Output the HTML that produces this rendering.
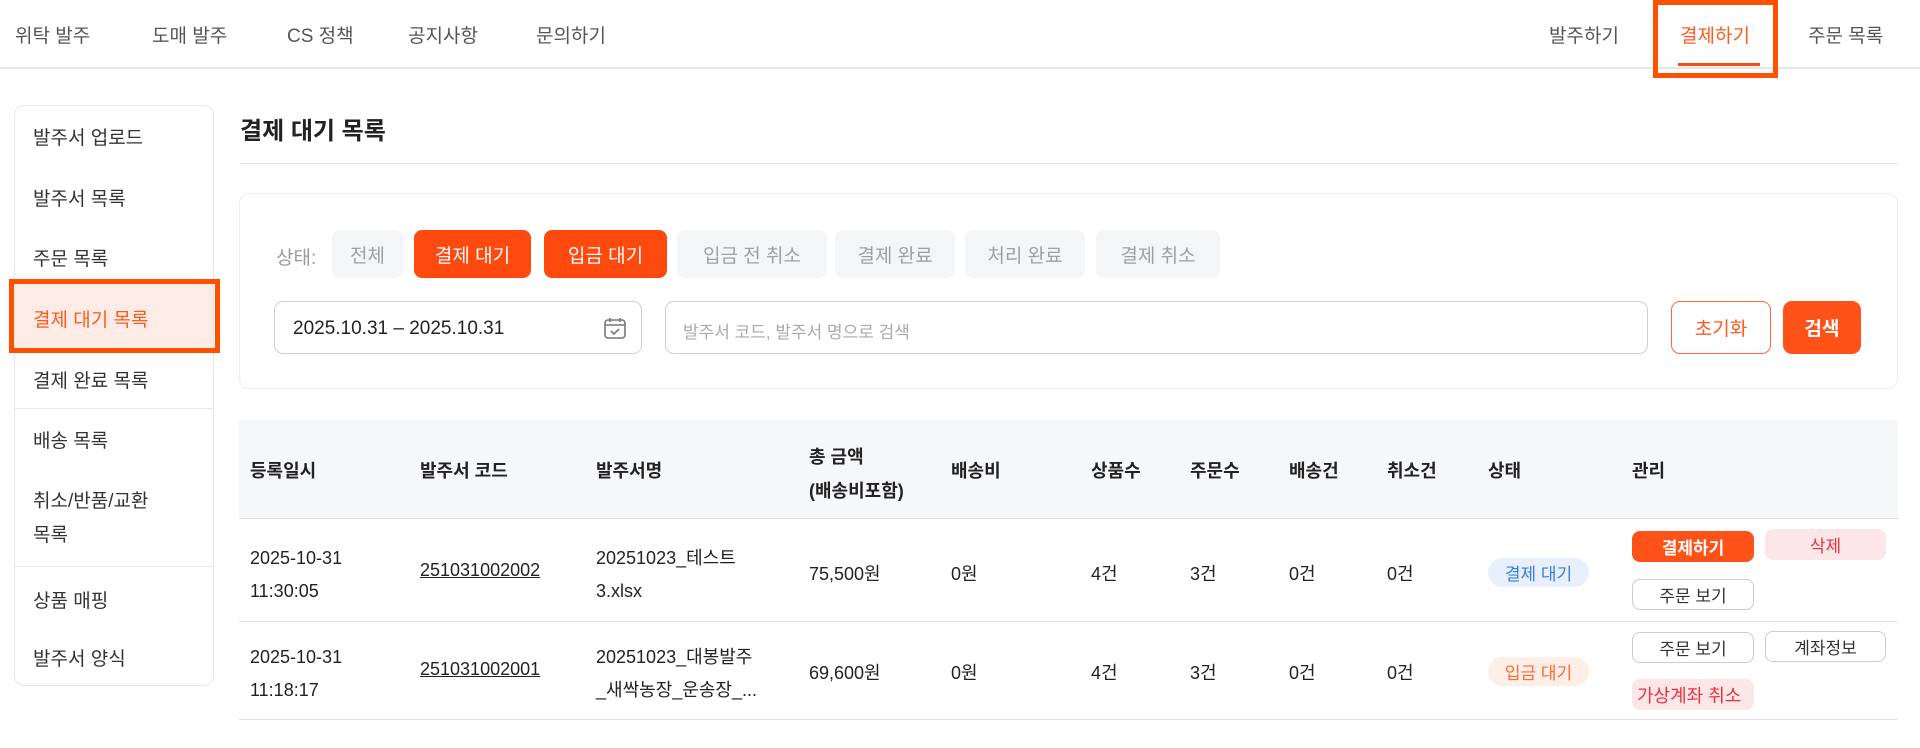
<!DOCTYPE html>
<html><head><meta charset="utf-8">
<style>
*{box-sizing:border-box;margin:0;padding:0}
body{width:1920px;height:748px;background:#fff;font-family:"Liberation Sans","Noto Sans CJK KR",sans-serif;color:#222;position:relative;overflow:hidden}
.a{position:absolute;white-space:nowrap}
.nav{font-size:19px;color:#555;top:21px}
.side{font-size:19px;color:#333;left:33px}
.chip{position:absolute;top:230px;height:48px;border-radius:8px;background:#f4f5f7;color:#a0a0a0;font-size:19px;display:flex;align-items:center;justify-content:center}
.chip.on{background:#ff4a0f;color:#fff}
.th{font-size:18px;font-weight:bold;color:#222;top:457px}
.td{font-size:18px;color:#222}
.btn{position:absolute;height:31px;border-radius:8px;font-size:17px;display:flex;align-items:center;justify-content:center;overflow:hidden;white-space:nowrap}
</style></head><body>
<div class="a nav" style="left:15px">위탁 발주</div>
<div class="a nav" style="left:152px">도매 발주</div>
<div class="a nav" style="left:287px">CS 정책</div>
<div class="a nav" style="left:408px">공지사항</div>
<div class="a nav" style="left:536px">문의하기</div>
<div class="a nav" style="left:1549px">발주하기</div>
<div class="a nav" style="left:1680px;color:#ff5a1f">결제하기</div>
<div class="a nav" style="left:1808px">주문 목록</div>
<div class="a" style="left:0;top:67px;width:1920px;height:2px;background:#e6e6e8"></div>
<div class="a" style="left:1678px;top:63px;width:82px;height:3px;background:#ff4a0f"></div>
<div class="a" style="left:1653px;top:0;width:125px;height:78px;border:5px solid #ff5000"></div>

<div class="a" style="left:14px;top:105px;width:200px;height:581px;border:1px solid #e6e6e8;border-radius:10px"></div>
<div class="a side" style="top:123px">발주서 업로드</div>
<div class="a side" style="top:184px">발주서 목록</div>
<div class="a side" style="top:244px">주문 목록</div>
<div class="a" style="left:15px;top:283px;width:198px;height:68px;background:#fdebe6"></div>
<div class="a side" style="top:305px;color:#ff5a1f">결제 대기 목록</div>
<div class="a" style="left:9px;top:279px;width:211px;height:74px;border:5px solid #ff5000"></div>
<div class="a side" style="top:366px">결제 완료 목록</div>
<div class="a" style="left:15px;top:408px;width:198px;height:1px;background:#e6e6e8"></div>
<div class="a side" style="top:426px">배송 목록</div>
<div class="a side" style="top:485px;line-height:34px;white-space:normal">취소/반품/교환<br>목록</div>
<div class="a" style="left:15px;top:566px;width:198px;height:1px;background:#e6e6e8"></div>
<div class="a side" style="top:586px">상품 매핑</div>
<div class="a side" style="top:644px">발주서 양식</div>

<div class="a" style="left:240px;top:111px;font-size:24px;font-weight:bold">결제 대기 목록</div>
<div class="a" style="left:240px;top:163px;width:1658px;height:1px;background:#e6e6e8"></div>

<div class="a" style="left:239px;top:193px;width:1659px;height:196px;border:1px solid #eeeef0;border-radius:10px"></div>
<div class="a" style="left:276px;top:243px;font-size:19px;color:#999">상태:</div>
<div class="chip" style="left:332px;width:71px">전체</div>
<div class="chip on" style="left:414px;width:117px">결제 대기</div>
<div class="chip on" style="left:544px;width:123px">입금 대기</div>
<div class="chip" style="left:677px;width:150px">입금 전 취소</div>
<div class="chip" style="left:835px;width:120px">결제 완료</div>
<div class="chip" style="left:965px;width:120px">처리 완료</div>
<div class="chip" style="left:1096px;width:124px">결제 취소</div>

<div class="a" style="left:274px;top:301px;width:368px;height:53px;border:1px solid #cfcfd3;border-radius:9px"></div>
<div class="a" style="left:293px;top:318px;font-size:19px;color:#222">2025.10.31 – 2025.10.31</div>
<svg class="a" style="left:603px;top:316px" width="24" height="24" viewBox="0 0 24 24" fill="none" stroke="#777" stroke-width="1.6"><rect x="2" y="4" width="20" height="18" rx="3"/><path d="M7 2v4M17 2v4M2 9h20M8 15l3 3 5-5"/></svg>
<div class="a" style="left:665px;top:301px;width:983px;height:53px;border:1px solid #cfcfd3;border-radius:9px"></div>
<div class="a" style="left:683px;top:318px;font-size:17px;color:#aaa">발주서 코드, 발주서 명으로 검색</div>
<div class="a" style="left:1671px;top:301px;width:100px;height:53px;border:1px solid #ff6a3a;border-radius:9px;color:#ff5a1f;font-size:19px;display:flex;align-items:center;justify-content:center">초기화</div>
<div class="a" style="left:1783px;top:301px;width:78px;height:53px;background:#ff5219;border-radius:9px;color:#fff;font-size:19px;font-weight:bold;display:flex;align-items:center;justify-content:center">검색</div>

<div class="a" style="left:239px;top:420px;width:1659px;height:99px;background:#f6f7f9;border-bottom:1px solid #dcdce0"></div>
<div class="a th" style="left:250px">등록일시</div>
<div class="a th" style="left:420px">발주서 코드</div>
<div class="a th" style="left:596px">발주서명</div>
<div class="a th" style="left:809px;top:440px;line-height:34px">총 금액<br>(배송비포함)</div>
<div class="a th" style="left:951px">배송비</div>
<div class="a th" style="left:1091px">상품수</div>
<div class="a th" style="left:1190px">주문수</div>
<div class="a th" style="left:1289px">배송건</div>
<div class="a th" style="left:1387px">취소건</div>
<div class="a th" style="left:1488px">상태</div>
<div class="a th" style="left:1632px">관리</div>

<div class="a td" style="left:250px;top:542px;line-height:33px">2025-10-31<br>11:30:05</div>
<div class="a td" style="left:420px;top:560px;text-decoration:underline">251031002002</div>
<div class="a td" style="left:596px;top:542px;line-height:33px">20251023_테스트<br>3.xlsx</div>
<div class="a td" style="left:809px;top:560px">75,500원</div>
<div class="a td" style="left:951px;top:560px">0원</div>
<div class="a td" style="left:1091px;top:560px">4건</div>
<div class="a td" style="left:1190px;top:560px">3건</div>
<div class="a td" style="left:1289px;top:560px">0건</div>
<div class="a td" style="left:1387px;top:560px">0건</div>
<div class="btn" style="left:1488px;top:558px;width:101px;height:29px;border-radius:15px;background:#e8f0fd;color:#3a7be0">결제 대기</div>
<div class="btn" style="left:1632px;top:531px;width:122px;background:#ff5219;color:#fff;font-weight:bold">결제하기</div>
<div class="btn" style="left:1765px;top:529px;width:121px;background:#fde6e8;color:#e8333f">삭제</div>
<div class="btn" style="left:1632px;top:579px;width:122px;border:1px solid #ccc;color:#333">주문 보기</div>
<div class="a" style="left:239px;top:621px;width:1659px;height:1px;background:#e2e2e6"></div>

<div class="a td" style="left:250px;top:641px;line-height:33px">2025-10-31<br>11:18:17</div>
<div class="a td" style="left:420px;top:659px;text-decoration:underline">251031002001</div>
<div class="a td" style="left:596px;top:641px;line-height:33px">20251023_대봉발주<br>_새싹농장_운송장_...</div>
<div class="a td" style="left:809px;top:659px">69,600원</div>
<div class="a td" style="left:951px;top:659px">0원</div>
<div class="a td" style="left:1091px;top:659px">4건</div>
<div class="a td" style="left:1190px;top:659px">3건</div>
<div class="a td" style="left:1289px;top:659px">0건</div>
<div class="a td" style="left:1387px;top:659px">0건</div>
<div class="btn" style="left:1488px;top:657px;width:101px;height:29px;border-radius:15px;background:#fdeee8;color:#ff6a30">입금 대기</div>
<div class="btn" style="left:1632px;top:632px;width:122px;border:1px solid #ccc;color:#333">주문 보기</div>
<div class="btn" style="left:1765px;top:631px;width:121px;border:1px solid #ccc;color:#333">계좌정보</div>
<div class="btn" style="left:1632px;top:679px;width:122px;background:#fde6e8;color:#e8333f;justify-content:flex-start;padding-left:5px;font-size:18px">가상계좌 취소</div>
<div class="a" style="left:239px;top:719px;width:1659px;height:1px;background:#e2e2e6"></div>
</body></html>
